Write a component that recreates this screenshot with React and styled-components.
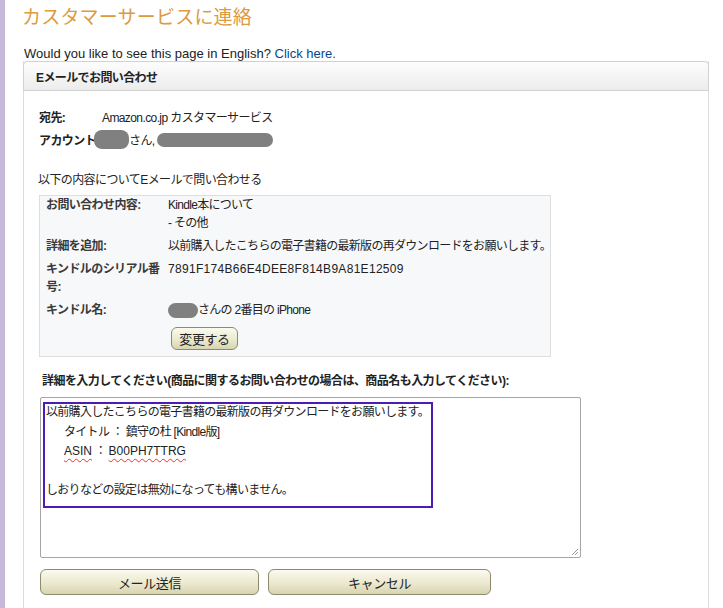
import React from 'react';
import styled, { createGlobalStyle } from 'styled-components';

const GlobalStyle = createGlobalStyle`
  html, body {
    margin: 0;
    padding: 0;
    background: #fff;
  }
  body {
    font-family: 'Liberation Sans', Arial, 'Noto Sans CJK JP', sans-serif;
    font-size: 13px;
    color: #222;
  }
`;

const StyledPage = styled.div`
  min-height: 608px;
  border-left: 5px solid #c6b8da;
  padding-left: 17px;
  box-sizing: border-box;
  overflow: hidden;
`;

const Title = styled.h1`
  margin: 3px 0 0 0;
  font-size: 19px;
  line-height: 26px;
  font-weight: normal;
  color: #dd9a3e;
  font-family: 'Noto Sans CJK JP', sans-serif;
  letter-spacing: 0.2px;
`;

const LangLine = styled.p`
  margin: 17px 0 0 2px;
  font-size: 13px;
  line-height: 15px;

  a {
    color: #004b91;
    text-decoration: none;
  }
`;

const Box = styled.section`
  margin-left: 1px;
  width: 686px;
  min-height: 560px;
  border-left: 1px solid #dcdcdc;
  border-right: 1px solid #dcdcdc;
  box-sizing: border-box;
`;

const BoxHeader = styled.div`
  height: 30px;
  margin: 0 -1px;
  display: flex;
  align-items: center;
  padding-left: 12px;
  border: 1px solid #d2d2d2;
  border-radius: 4px 4px 0 0;
  background: linear-gradient(#fdfdfd, #ececec);
  font-weight: bold;
  font-size: 12px;
  letter-spacing: -0.6px;
  color: #222;
  box-sizing: border-box;
`;

const BoxBody = styled.div`
  padding: 14px 0 0 15px;
`;

const InfoRow = styled.div`
  display: flex;
  align-items: center;
  height: 23px;
  font-size: 12px;
  letter-spacing: -0.6px;
  white-space: nowrap;
`;

const InfoLabel = styled.span`
  width: ${(p) => p.$w || 63}px;
  flex-shrink: 0;
  font-weight: bold;
  color: #222;
`;

const Blob = styled.span`
  display: inline-block;
  width: ${(p) => p.$w}px;
  height: ${(p) => p.$h || 16}px;
  background: #808080;
  border-radius: 8px;
  vertical-align: middle;
`;

const Intro = styled.p`
  margin: 22px 0 0 -1px;
  font-size: 12px;
  line-height: 15px;
  letter-spacing: -0.6px;
`;

const SummaryBox = styled.div`
  margin: 7px 0 0 0;
  width: 512px;
  padding: 0 0 6px 6px;
  background: #f7f8fa;
  border: 1px solid #dedede;
  box-sizing: border-box;
`;

const SummaryGrid = styled.div`
  display: grid;
  grid-template-columns: 122px 1fr;
  row-gap: 5px;
  font-size: 12px;
  line-height: 18px;
  letter-spacing: -0.7px;
`;

const SummaryLabel = styled.div`
  font-weight: bold;
  color: #3a3a3a;
  letter-spacing: -0.6px;
`;

const SummaryValue = styled.div`
  color: #222;
  white-space: nowrap;
  letter-spacing: ${(p) => (p.$latin ? '0.3px' : 'inherit')};
`;

const OliveButton = styled.button`
  width: ${(p) => p.$w}px;
  height: ${(p) => p.$h || 26}px;
  border: 1px solid #8c8b70;
  border-radius: 6px;
  background: linear-gradient(#fbfaee, #e9e7cc 60%, #d7d4b1);
  font-family: 'Liberation Sans', 'Noto Sans CJK JP', sans-serif;
  font-size: 13px;
  letter-spacing: -0.4px;
  color: #222;
  padding: 0;
  cursor: pointer;
`;

const ChangeWrap = styled.div`
  margin: 8px 0 0 125px;
`;

const FieldLabel = styled.div`
  margin: 17px 0 0 3px;
  font-size: 12px;
  font-weight: bold;
  line-height: 15px;
  letter-spacing: -0.55px;
  white-space: nowrap;
`;

const FakeTextarea = styled.div`
  position: relative;
  margin: 8px 0 0 1px;
  width: 541px;
  height: 161px;
  border: 1px solid #a5a5a5;
  border-radius: 2px;
  box-sizing: border-box;
  padding: 5px 0 0 5px;
  font-size: 12px;
  line-height: 19.6px;
  letter-spacing: -0.7px;
  background: #fff;
`;

const TextLine = styled.div`
  padding-left: ${(p) => (p.$indent ? 18 : 0)}px;
  min-height: 19.6px;
  white-space: nowrap;
`;

const Misspelled = styled.span`
  text-decoration: underline wavy #e33;
  text-decoration-thickness: 1px;
  text-underline-offset: 3px;
  letter-spacing: 0;
`;

const Annotation = styled.div`
  position: absolute;
  left: 2px;
  top: 4px;
  width: 390px;
  height: 106px;
  border: 2px solid #4d1cb6;
  box-sizing: border-box;
  pointer-events: none;
`;

const ResizeGrip = styled.svg`
  position: absolute;
  right: 1px;
  bottom: 1px;
`;

const ButtonRow = styled.div`
  display: flex;
  gap: 9px;
  margin: 11px 0 0 1px;
`;

const App = () => (
  <StyledPage>
    <GlobalStyle />
    <Title>カスタマーサービスに連絡</Title>
    <LangLine>
      Would you like to see this page in English? <a href="#">Click here.</a>
    </LangLine>
    <Box>
      <BoxHeader>Eメールでお問い合わせ</BoxHeader>
      <BoxBody>
        <InfoRow>
          <InfoLabel>宛先:</InfoLabel>
          <span>Amazon.co.jp カスタマーサービス</span>
        </InfoRow>
        <InfoRow>
          <InfoLabel $w={55}>アカウント:</InfoLabel>
          <Blob $w={35} $h={19} />
          <span>さん,</span>
          <Blob $w={116} $h={14} style={{ marginLeft: 2 }} />
        </InfoRow>
        <Intro>以下の内容についてEメールで問い合わせる</Intro>
        <SummaryBox>
          <SummaryGrid>
            <SummaryLabel>お問い合わせ内容:</SummaryLabel>
            <SummaryValue>
              Kindle本について
              <br />- その他
            </SummaryValue>
            <SummaryLabel>詳細を追加:</SummaryLabel>
            <SummaryValue>以前購入したこちらの電子書籍の最新版の再ダウンロードをお願いします。</SummaryValue>
            <SummaryLabel>キンドルのシリアル番号:</SummaryLabel>
            <SummaryValue $latin>7891F174B66E4DEE8F814B9A81E12509</SummaryValue>
            <SummaryLabel>キンドル名:</SummaryLabel>
            <SummaryValue>
              <Blob $w={30} $h={15} />
              さんの 2番目の iPhone
            </SummaryValue>
          </SummaryGrid>
          <ChangeWrap>
            <OliveButton $w={67} $h={23}>変更する</OliveButton>
          </ChangeWrap>
        </SummaryBox>
        <FieldLabel>
          詳細を入力してください(商品に関するお問い合わせの場合は、商品名も入力してください):
        </FieldLabel>
        <FakeTextarea>
          <TextLine>以前購入したこちらの電子書籍の最新版の再ダウンロードをお願いします。</TextLine>
          <TextLine $indent>タイトル ： 鎮守の杜 [Kindle版]</TextLine>
          <TextLine $indent>
            <Misspelled>ASIN</Misspelled> ： <Misspelled>B00PH7TTRG</Misspelled>
          </TextLine>
          <TextLine />
          <TextLine>しおりなどの設定は無効になっても構いません。</TextLine>
          <Annotation />
          <ResizeGrip width="10" height="10" viewBox="0 0 10 10">
            <path d="M9 3 L3 9 M9 6 L6 9" stroke="#999" strokeWidth="1" fill="none" />
          </ResizeGrip>
        </FakeTextarea>
        <ButtonRow>
          <OliveButton $w={219}>メール送信</OliveButton>
          <OliveButton $w={223}>キャンセル</OliveButton>
        </ButtonRow>
      </BoxBody>
    </Box>
  </StyledPage>
);

export default App;
